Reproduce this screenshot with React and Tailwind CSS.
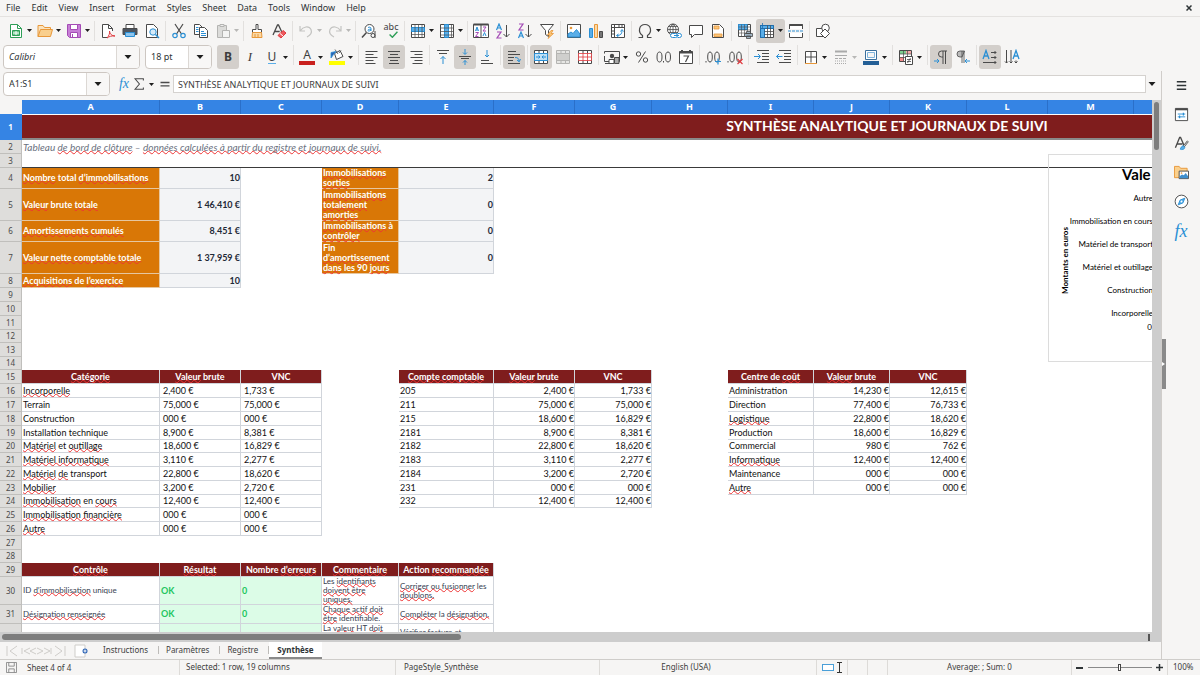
import React from 'react';
import clsx from 'clsx';

const INK = '#4a4a4a';
const BLUE = '#2a8fd4';
const ORANGE = '#e8983a';
const PURPLE = '#a44bb5';
const RED = '#e0393e';

// 16x16 toolbar glyphs
const ICONS = {
  newDoc: (
    <>
      <path d="M2.5 1.5h7l4 4v9h-11z" fill="#fff" stroke="#2e9e57" />
      <path d="M9.5 1.5v4h4" fill="none" stroke="#2e9e57" />
      <path d="M4.500 7.500h7v5h-7z" fill="#6cc58a" stroke="#2e9e57" />
      <path d="M5 10h6M8 8v4" stroke="#fff" />
    </>
  ),
  open: (
    <>
      <path d="M1 13.500v-11h5l1.500 2h6v3" fill="#fbe3bd" stroke={ORANGE} />
      <path d="M1 13.500l2.500-7h12l-2 7z" fill="#f9cf8d" stroke={ORANGE} />
    </>
  ),
  save: (
    <>
      <path d="M1.500 1.500h13v13h-11l-2-2z" fill="#c77fd6" stroke={PURPLE} />
      <path d="M4.500 1.500h7v5h-7z" fill="#fff" stroke={PURPLE} />
      <path d="M4.500 9.500h7v5h-7z" fill="#fff" stroke={PURPLE} />
      <path d="M6.500 11v3" stroke={PURPLE} />
    </>
  ),
  pdf: (
    <>
      <path d="M12.500 8V5.500l-4-4h-6v13H7" fill="#fff" stroke={INK} />
      <path d="M8.500 1.500v4h4" fill="none" stroke={INK} />
      <path d="M7 15c2-2 3-5 2.500-7 0 3 2.500 5 5.500 5-3-.5-6 .5-8 2z" fill="#fff" stroke={RED} />
    </>
  ),
  print: (
    <>
      <path d="M4 1.500h8v4H4z" fill="#fff" stroke={INK} />
      <path d="M1 5.500h14v6H1z" fill="#4d5560" stroke={INK} />
      <path d="M3.500 9.500h9v4h-9z" fill="#8cc4ee" stroke={BLUE} />
    </>
  ),
  preview: (
    <>
      <path d="M2.500 1.500h7l4 4v9h-11z" fill="#fff" stroke={INK} />
      <circle cx="9" cy="9" r="3.200" fill="#d5ebfa" stroke={BLUE} />
      <path d="M11.500 11.500l3.500 3.500" stroke={BLUE} strokeWidth="1.500" />
    </>
  ),
  cut: (
    <>
      <path d="M4 1l6.500 10M12 1L5.500 11" stroke={INK} fill="none" strokeWidth="1.200" />
      <circle cx="4" cy="12.500" r="2.200" fill="none" stroke={BLUE} strokeWidth="1.200" />
      <circle cx="12" cy="12.500" r="2.200" fill="none" stroke={BLUE} strokeWidth="1.200" />
    </>
  ),
  copy: (
    <>
      <path d="M1.500 1.500h5l3 3v7h-8z" fill="#fff" stroke={INK} />
      <path d="M6.500 4.500h5l3 3v7h-8z" fill="#fff" stroke={INK} />
      <path d="M3 4.500h2.500M3 6.500h2.500M3 8.500h2.500M8 8.500h3M8 10.500h5M8 12.500h5" stroke={BLUE} />
    </>
  ),
  paste: (
    <>
      <path d="M2.500 2.500h9v12h-9z" fill="#dcdcda" stroke="#b4b4b2" />
      <path d="M5 1.500h4v2H5z" fill="#eee" stroke="#b4b4b2" />
      <path d="M7.500 7.500h7v7h-7z" fill="#f4f4f3" stroke="#b4b4b2" />
    </>
  ),
  brush: (
    <>
      <path d="M7 1.500h2v5h3.500v3h-9v-3H7z" fill="#fff" stroke={INK} />
      <path d="M3.500 9.500h9l.500 5h-10z" fill="#fbd9a5" stroke={ORANGE} />
      <path d="M6 11v3M9 11v3" stroke={ORANGE} />
    </>
  ),
  clear: (
    <>
      <path d="M2 12L6.500 2h1L11 9.500M3.700 8.500h5" stroke={INK} fill="none" strokeWidth="1.300" />
      <path d="M7 12.500l5-5 3 2.500-5 5z" fill="#ee5a5f" stroke={RED} />
      <path d="M9 10.500l3 2.500" stroke="#fff" />
    </>
  ),
  undo: <path d="M2 3v5h5M2.500 7.500C5 3.500 11 2.500 13 6.500c1.500 4-2 6.500-4 7.500" stroke="#c3c3c1" fill="none" strokeWidth="1.200" />,
  redo: <path d="M14 3v5H9M13.500 7.500C11 3.500 5 2.500 3 6.500c-1.500 4 2 6.500 4 7.500" stroke="#c3c3c1" fill="none" strokeWidth="1.200" />,
  find: (
    <>
      <circle cx="8.500" cy="6" r="4.500" fill="#fff" stroke={INK} />
      <path d="M5.500 9.500L1 14.500" stroke={INK} strokeWidth="1.500" />
      <path d="M7 4.700c1-1 3-.7 3 .8V8M10 6.200c-4-.3-3.700 2.300-1.500 1.700L10 7" stroke={BLUE} fill="none" />
      <circle cx="12" cy="12.500" r="2" fill="#fff" stroke={INK} />
      <path d="M14 8v7" stroke={INK} />
    </>
  ),
  rowOps: (
    <>
      <path d="M1.500 1.500h13v13h-13z" fill="#fff" stroke={INK} />
      <path d="M1.500 4.500h13v4h-13z" fill="#5aaee8" stroke={BLUE} />
      <path d="M1.500 11.500h13M5 1.500v13M8.500 1.500v13M12 1.500v13" stroke={INK} strokeOpacity=".7" />
    </>
  ),
  colOps: (
    <>
      <path d="M1.500 1.500h13v13h-13z" fill="#fff" stroke={INK} />
      <path d="M5.500 1.500h4v13h-4z" fill="#5aaee8" stroke={BLUE} />
      <path d="M1.500 5h13M1.500 8.500h13M1.500 12h13M12.500 1.500v13" stroke={INK} strokeOpacity=".7" />
    </>
  ),
  sort: (
    <>
      <path d="M.5 1.500h15v13H.5zM8 1.500v13" fill="#fff" stroke={INK} />
      <path d="M.5 1.500h15" stroke={INK} strokeWidth="2" />
      <path d="M2.500 8l1.500-4 1.500 4M10 13l1.500-3.500L13 13M3 7h2" stroke={BLUE} fill="none" />
      <path d="M2.500 9.500h3l-3 4h3M10 4h3L10 8h3" stroke={PURPLE} fill="none" />
    </>
  ),
  sortAsc: (
    <>
      <path d="M1.500 7L4 1l2.500 6M2.500 5h3" stroke={BLUE} fill="none" strokeWidth="1.200" />
      <path d="M2 9h4l-4 6h4.500" stroke={PURPLE} fill="none" strokeWidth="1.200" />
      <path d="M11.500 2v12M8.500 11l3 3 3-3" stroke={INK} fill="none" />
    </>
  ),
  sortDesc: (
    <>
      <path d="M2 1h4L2 7h4.500" stroke={PURPLE} fill="none" strokeWidth="1.200" />
      <path d="M1.500 15L4 9l2.500 6M2.500 13h3" stroke={BLUE} fill="none" strokeWidth="1.200" />
      <path d="M11.500 2v12M8.500 11l3 3 3-3" stroke={INK} fill="none" />
    </>
  ),
  filter: (
    <>
      <path d="M1.500 1.500h13l-5 6v6l-3-2v-4z" fill="#fff" stroke={INK} />
      <path d="M12 7.500L8.500 12H11l-2 3.500 5.500-5H12l2-3z" fill="#fbc67a" stroke={ORANGE} strokeWidth=".8" />
    </>
  ),
  image: (
    <>
      <path d="M1.500 1.500h13v13h-13z" fill="#fff" stroke={INK} />
      <circle cx="5" cy="5" r="1.300" fill={ORANGE} />
      <path d="M2 14v-3l3-2 2 1.500 3.500-4L14 11v3z" fill="#5aaee8" stroke={BLUE} />
    </>
  ),
  chart: (
    <>
      <path d="M1.500 5.500h3v9h-3z" fill="#5aaee8" stroke={BLUE} />
      <path d="M6.500 1.500h3v13h-3z" fill="#fbd9a5" stroke={ORANGE} />
      <path d="M11.500 8.500h3v6h-3z" fill="#777" stroke={INK} />
    </>
  ),
  pivot: (
    <>
      <path d="M1.500 1.500h13v13h-13zM1.500 4.500h13M4.500 1.500v13" fill="#fff" stroke={INK} />
      <path d="M9 1.500v3M12 1.500v3M1.500 8h3M1.500 11h3" stroke={INK} />
      <path d="M7 12.500c3.500 0 5-1.500 5-5M10.500 8.500l1.500-2 1.500 2M8.500 11l-2 1.500 2 1.500" stroke={BLUE} fill="none" />
    </>
  ),
  omega: <path d="M1.500 14.500h4v-2C.5 9 2 1.500 8 1.500s7.500 7.500 2.500 11v2h4" stroke={INK} fill="none" strokeWidth="1.200" />,
  link: (
    <>
      <circle cx="7" cy="6.500" r="5.500" fill="#fff" stroke={INK} />
      <path d="M1.500 6.500h11M7 1v11M3 3.500h8M3 9.500h8M7 1C3 4 3 9 7 12M7 1c4 3 4 8 0 11" stroke={INK} fill="none" strokeWidth=".8" />
      <path d="M6.500 10.500h3a2 2 0 010 4h-3a2 2 0 010-4zM11.500 10.500h2a2 2 0 010 4h-2" fill="#fff" stroke={BLUE} />
      <path d="M8 12.500h5" stroke={BLUE} />
    </>
  ),
  comment: <path d="M1.500 2.500h13v9h-8l-3 3v-3h-2z" stroke={INK} fill="#fff" />,
  headerFooter: (
    <>
      <path d="M2.500 1.500h7l4 4v9h-11z" fill="#fff" stroke={INK} />
      <path d="M4 3h5v3H4zM4 11h8v2.500H4z" fill="#fbc67a" stroke={ORANGE} strokeWidth=".8" />
    </>
  ),
  printArea: (
    <>
      <path d="M1.500 1.500h12v12h-12z" fill="#fff" stroke={INK} />
      <path d="M1.500 1.500h9v5h-9z" fill="#5aaee8" stroke={BLUE} />
      <path d="M1.500 4h12M1.500 7h12M1.500 10h12M4.500 1.500v12M7.500 1.500v12M10.500 1.500v12" stroke={INK} strokeWidth=".6" />
      <path d="M7.500 10.500h8v3h-8zM9.500 8.500h4v2h-4zM9.500 13h4v2.500h-4z" fill="#9fb4c4" stroke={INK} strokeWidth=".8" />
    </>
  ),
  freeze: (
    <>
      <path d="M1.500 2.500h13v12h-13z" fill="#fff" stroke={INK} />
      <path d="M1.500 2.500h13v3h-13zM1.500 5.500h4v9h-4z" fill="#5aaee8" stroke="#1f6fae" />
      <path d="M5.500 8.500h9M5.500 11.500h9M8.500 2.500v12M11.500 2.500v12" stroke={INK} strokeWidth=".8" />
      <path d="M3.500 0v5M1 2.500h5" stroke="#1f6fae" strokeWidth=".8" />
    </>
  ),
  split: (
    <>
      <path d="M1.500 6V1.500h13V6M1.500 10v4.500h13V10" fill="#fff" stroke={INK} />
      <path d="M1.500 2h13" stroke={INK} strokeWidth="2" />
      <path d="M0 8h16" stroke={BLUE} strokeDasharray="3 1" />
    </>
  ),
  shapes: (
    <>
      <path d="M1.500 5.500h7v8h-7z" fill="#fff" stroke={INK} />
      <circle cx="10.500" cy="5" r="3.800" fill="#fff" stroke={INK} />
      <path d="M5.500 10.500L10 6l4.500 4.500L10 15z" fill="#fff" stroke={INK} />
    </>
  ),
  alignLeft: <path d="M1.500 2.500h12M1.500 5.500h8M1.500 8.500h12M1.500 11.500h8M1.500 14.500h10" stroke={INK} />,
  alignCenter: <path d="M2 2.500h12M4 5.500h8M2 8.500h12M4 11.500h8M3 14.500h10" stroke={INK} />,
  alignRight: <path d="M2.500 2.500h12M6.500 5.500h8M2.500 8.500h12M6.500 11.500h8M4.500 14.500h10" stroke={INK} />,
  vTop: (
    <>
      <path d="M2 1.500h12M4 4.500h8" stroke={INK} />
      <path d="M8 15V7.500M5.500 10L8 7.500l2.500 2.500" stroke={BLUE} fill="none" />
    </>
  ),
  vMiddle: (
    <>
      <path d="M2 7.500h12M4 9.500h8" stroke={INK} />
      <path d="M8 0v5M6 3.500l2 2 2-2M8 16.500v-5M6 13.500l2-2 2 2" stroke={BLUE} fill="none" />
    </>
  ),
  vBottom: (
    <>
      <path d="M2 14.500h12M2 11.500h8" stroke={INK} />
      <path d="M8 1v7M6 6l2 2 2-2" stroke={BLUE} fill="none" />
    </>
  ),
  wrap: (
    <>
      <path d="M2 2.500h8M2 5.500h12M2 8.500h6M2 11.500h5M2 14.500h12" stroke={INK} />
      <path d="M9 8.500c3 0 4 1 4 4M11 11l2.200 1.800L14.500 10" stroke={BLUE} fill="none" />
    </>
  ),
  mergeCenter: (
    <>
      <path d="M1.500 1.500h13v13h-13zM6 1.500v3M10.500 1.500v3M6 11.500v3M10.500 11.500v3" fill="#fff" stroke={INK} />
      <path d="M1.500 4.500h13v7h-13z" fill="#bfe0f6" stroke={BLUE} />
      <path d="M3 8h4M9 8h4M5.500 6.500L7 8l-1.500 1.500M10.500 6.500L9 8l1.500 1.500" stroke={BLUE} fill="none" />
    </>
  ),
  merge: (
    <>
      <path d="M1.500 1.500h13v13h-13zM6 1.500v3M10.500 1.500v3M6 11.500v3M10.500 11.500v3" fill="#e6e6e4" stroke="#b4b4b2" />
      <path d="M1.500 4.500h13v7h-13z" fill="#cfcfcd" stroke="#b4b4b2" />
    </>
  ),
  unmerge: (
    <>
      <path d="M1.500 1.500h13v13h-13zM6 1.500v13M10.500 1.500v13" fill="#fff" stroke={INK} />
      <path d="M1.500 4.500h13v7h-13zM6 4.500v7M10.500 4.500v7M1.500 8h13" fill="#fff" stroke={RED} strokeWidth=".8" />
    </>
  ),
  currency: (
    <>
      <path d="M.5 4.500v-2h15v10h-4M.5 7v5.500h5" fill="none" stroke={INK} />
      <circle cx="8" cy="7" r="2.200" fill={INK} />
      <path d="M5 10.500h5v4H5z" fill="#fff" stroke={INK} />
      <path d="M10.500 8.500h4.500v6h-4.500z" fill="#aaa" stroke={INK} />
      <path d="M1 14.500h4" stroke={INK} />
    </>
  ),
  percent: (
    <>
      <circle cx="4.500" cy="5" r="2.200" fill="none" stroke={INK} />
      <circle cx="11.500" cy="11" r="2.200" fill="none" stroke={INK} />
      <path d="M11.500 2.500l-7 11" stroke={INK} />
    </>
  ),
  decimal: (
    <>
      <ellipse cx="3.500" cy="8" rx="2.500" ry="5" fill="none" stroke={INK} />
      <ellipse cx="12" cy="8" rx="2.500" ry="5" fill="none" stroke={INK} />
      <path d="M7.500 12v1.500" stroke={INK} />
    </>
  ),
  date: (
    <>
      <path d="M1.500 2.500h13v12h-13z" fill="#fff" stroke={INK} />
      <path d="M1.500 3.500h13M4 1v3M12 1v3" stroke={INK} strokeWidth="2" />
      <path d="M5.500 7h5l-3 6" stroke={INK} fill="none" strokeWidth="1.200" />
    </>
  ),
  addDecimal: (
    <>
      <path d="M1 12v1.500" stroke={INK} />
      <ellipse cx="5" cy="8" rx="2.300" ry="5" fill="none" stroke={INK} />
      <ellipse cx="12" cy="8" rx="2.300" ry="5" fill="none" stroke={INK} />
      <path d="M13 9.500v6M10 12.500h6" stroke={BLUE} strokeWidth="1.200" />
    </>
  ),
  delDecimal: (
    <>
      <path d="M1 12v1.500" stroke={INK} />
      <ellipse cx="5" cy="8" rx="2.300" ry="5" fill="none" stroke={INK} />
      <ellipse cx="12" cy="8" rx="2.300" ry="5" fill="none" stroke={INK} />
      <path d="M10.500 10l5 5M15.500 10l-5 5" stroke={RED} strokeWidth="1.200" />
    </>
  ),
  indent: (
    <>
      <path d="M3 1.500h12M8 4.500h7M8 7.500h7M8 10.500h7M3 13.500h12" stroke={INK} />
      <path d="M0 7.500h6M4 5l2.500 2.500L4 10" stroke={BLUE} fill="none" />
    </>
  ),
  outdent: (
    <>
      <path d="M3 1.500h12M8 4.500h7M8 7.500h7M8 10.500h7M3 13.500h12" stroke={INK} />
      <path d="M.5 7.500h6M3 5L.5 7.500 3 10" stroke={BLUE} fill="none" />
    </>
  ),
  borders: (
    <>
      <path d="M2.500 14V2.500h11V14M8 2.500v11M2.500 8h11" fill="#fff" stroke={INK} />
      <path d="M2 14.500h12" stroke={ORANGE} />
    </>
  ),
  lineStyle: (
    <>
      <path d="M2 2.500h12" stroke="#aaa" strokeWidth="2" />
      <path d="M2 6.500h12" stroke="#aaa" />
      <path d="M2 9.500h12" stroke="#aaa" strokeDasharray="3 1" />
      <path d="M2 12h12M2 14.500h12" stroke="#aaa" strokeDasharray="1 1" />
    </>
  ),
  lineColor: (
    <>
      <path d="M2.500 1.500h11v9h-11z" fill="#fff" stroke="#3a6f9c" />
      <path d="M4.500 3.500h7v5h-7z" fill="#f6f5f4" stroke="#7fb4dc" />
      <path d="M0 14h16" stroke="#245f96" strokeWidth="4" />
    </>
  ),
  conditional: (
    <>
      <path d="M1.500 1.500h12v11h-12z" fill="#fff" stroke={INK} />
      <path d="M2 2h6v3H2z" fill="#7ccf8f" />
      <path d="M2 8h4v4H2z" fill="#f08a8a" />
      <path d="M8 2h5v3H8z" fill="#f5a9a9" />
      <path d="M1.500 5h12M1.500 8.500h12M5.500 1.500v11M9.500 1.500v11" stroke={INK} strokeWidth=".7" />
      <path d="M7.500 7.500h7v8h-7z" fill="#fff" stroke={INK} />
      <path d="M9 10.500h4M9 12.500h4M12.500 9l-3 5" stroke={INK} strokeWidth=".8" />
    </>
  ),
  ltr: (
    <>
      <path d="M14 2H8.500a3 3 0 000 6H10M10 2v13M12.500 2v13" stroke={INK} fill="none" />
      <path d="M1 12h5M4 10l2 2-2 2" stroke={BLUE} fill="none" />
    </>
  ),
  rtl: (
    <>
      <path d="M9.500 2H5a3 3 0 000 6h2zM7 2v12M9 2v12" stroke={INK} fill="#bbb" strokeWidth=".8" />
      <path d="M15 12h-5M12 10l-2 2 2 2" stroke={BLUE} fill="none" />
    </>
  ),
  textH: (
    <>
      <path d="M1 10l3-8.500L7 10M2 7h4" stroke={BLUE} fill="none" strokeWidth="1.300" />
      <path d="M9 3.500h5M9 8.500h5M1 13.500h13M12.500 2l1.500 1.500L12.500 5M12.500 7L14 8.500 12.500 10M12.500 12l1.500 1.500-1.500 1.500" stroke={INK} fill="none" />
    </>
  ),
  textV: (
    <>
      <path d="M9 10l3-8.500L15 10M10 7h4" stroke={BLUE} fill="none" strokeWidth="1.300" />
      <path d="M2.500 1v13M7 1v13M12 11.500V14M1 12.500L2.500 14 4 12.500M5.500 12.500L7 14l1.500-1.500M10.500 12.500L12 14l1.500-1.500" stroke={INK} fill="none" />
    </>
  ),
  bucket: (
    <>
      <path d="M5.500 4.500l5.500-3 3 6-6.500 3z" fill="#fff" stroke={INK} />
      <path d="M9 5L6 .500M10 4l2-2.500" stroke={INK} fill="none" strokeWidth=".8" />
      <path d="M2 9V3.500l5-1-2.500 3z" fill="#2a62b4" stroke={BLUE} strokeWidth=".8" />
      <path d="M0 14h16" stroke="#ff0" strokeWidth="4" />
    </>
  ),
  props: (
    <>
      <path d="M1.500 1.500h13v13h-13z" fill="#fff" stroke={INK} />
      <path d="M1.500 2.500h13" stroke={INK} strokeWidth="2" />
      <path d="M4 7.500h8M4 10.500h8" stroke={BLUE} />
      <path d="M10 6v3M6 9v3" stroke={BLUE} strokeWidth="1.300" />
    </>
  ),
  styles: (
    <>
      <path d="M1.500 12.500L6 1.500h1l3.500 8M3 8.500h6" stroke={INK} fill="none" strokeWidth="1.400" />
      <path d="M15 5.500l-5 6" stroke={INK} strokeWidth="2.200" />
      <path d="M15 5.500l-5 6" stroke="#fff" strokeWidth=".8" />
      <path d="M10 10.500c-2 0-2.500 2-3.500 3.500 2 1 5 .5 5-2z" fill="#5aaee8" stroke={BLUE} strokeWidth=".8" />
    </>
  ),
  gallery: (
    <>
      <path d="M.5 13.500v-12h5l1.500 2h7v10z" fill="#fbd08c" stroke={ORANGE} />
      <path d="M5.500 6.500h10v8h-10z" fill="#fff" stroke={INK} />
      <path d="M6 14v-2l2.500-2 2 1 2-2.500L15 12v2z" fill="#3f8fce" />
      <circle cx="8" cy="8.500" r=".9" fill={ORANGE} />
    </>
  ),
  navigator: (
    <>
      <circle cx="8" cy="8" r="6.800" fill="#fff" stroke={INK} />
      <path d="M11.500 4.500L9.500 9.500l-5 2 2-5z" fill="#5aaee8" stroke={BLUE} />
      <circle cx="8" cy="8" r="1" fill="#fff" />
    </>
  ),
  burger: <path d="M3 4h10M3 8h10M3 12h10" stroke="#2e3436" strokeWidth="1.400" />,
  sigma: <path d="M13 4V2H3.500l5 6-5 6H13v-2" stroke={INK} fill="none" strokeWidth="1.200" />,
  equals: <path d="M2 6h12M2 10.500h12" stroke={INK} strokeWidth="1.800" />,
};

const Icon = ({ name, className = 'size-4' }) => (
  <svg viewBox="0 0 16 16" className={className} aria-hidden="true">
    {ICONS[name]}
  </svg>
);

const Caret = ({ className = 'h-[3px] w-[5px]', faded }) => (
  <svg viewBox="0 0 7 4" className={className} aria-hidden="true">
    <path d="M0 0h7L3.500 4z" fill={faded ? '#b8b8b6' : '#1e1e1e'} />
  </svg>
);

const Fx = ({ className }) => (
  <span className={clsx("font-['Liberation_Serif',serif] italic text-[#2a8fd4]", className)}>fx</span>
);

const Glyph = ({ name }) => {
  switch (name) {
    case 'bold':
      return <span className="text-[12px] font-bold text-[#3d3d3d]">B</span>;
    case 'italic':
      return <span className="font-['Liberation_Serif',serif] text-[13px] italic text-[#3d3d3d]">I</span>;
    case 'underline':
      return <span className="border-b border-[#5aaee8] text-[12px] leading-[13px] text-[#3d3d3d]">U</span>;
    case 'fontColor':
      return <span className="w-4 border-b-4 border-[#c9211e] text-center text-[12px] leading-[12px] text-[#3d3d3d]">A</span>;
    case 'spell':
      return (
        <span className="flex flex-col items-end text-[9px] leading-[8px] text-[#3d3d3d]">
          abc
          <svg viewBox="0 0 8 6" className="h-[7px] w-[9px]" aria-hidden="true">
            <path d="M.5 3L3 5.500 7.500.5" fill="none" stroke="#2e9e57" strokeWidth="1.200" />
          </svg>
        </span>
      );
    default:
      return <Icon name={name} />;
  }
};

// '|' = separator, v = has a drop-down caret, on = pressed, off = disabled
const STANDARD = [
  { n: 'newDoc', v: 1 }, { n: 'open', v: 1 }, { n: 'save', v: 1 }, '|',
  { n: 'pdf' }, { n: 'print' }, { n: 'preview' }, '|',
  { n: 'cut' }, { n: 'copy' }, { n: 'paste', v: 1, off: 1 }, '|',
  { n: 'brush' }, { n: 'clear' }, '|',
  { n: 'undo', v: 1, off: 1 }, { n: 'redo', v: 1, off: 1 }, '|',
  { n: 'find' }, { n: 'spell' }, '|',
  { n: 'rowOps', v: 1 }, { n: 'colOps', v: 1 }, '|',
  { n: 'sort' }, { n: 'sortAsc' }, { n: 'sortDesc' }, { n: 'filter' }, '|',
  { n: 'image' }, { n: 'chart' }, { n: 'pivot' }, '|',
  { n: 'omega', v: 1 }, { n: 'link' }, { n: 'comment' }, { n: 'headerFooter' }, '|',
  { n: 'printArea' }, { n: 'freeze', v: 1, on: 1 }, { n: 'split' }, '|',
  { n: 'shapes' },
];

const FORMATTING = [
  { n: 'bold', on: 1 }, { n: 'italic' }, { n: 'underline', v: 1 }, '|',
  { n: 'fontColor', v: 1 }, { n: 'bucket', v: 1 }, '|',
  { n: 'alignLeft' }, { n: 'alignCenter', on: 1 }, { n: 'alignRight' }, '|',
  { n: 'vTop' }, { n: 'vMiddle', on: 1 }, { n: 'vBottom' }, '|',
  { n: 'wrap', on: 1 }, '|',
  { n: 'mergeCenter', on: 1 }, { n: 'merge', off: 1 }, { n: 'unmerge' }, '|',
  { n: 'currency', v: 1 }, { n: 'percent' }, { n: 'decimal' }, { n: 'date' }, '|',
  { n: 'addDecimal' }, { n: 'delDecimal' }, '|',
  { n: 'indent' }, { n: 'outdent' }, '|',
  { n: 'borders', v: 1 }, { n: 'lineStyle', v: 1, off: 1 }, { n: 'lineColor', v: 1 }, '|',
  { n: 'conditional', v: 1 }, '|',
  { n: 'ltr', on: 1 }, { n: 'rtl' }, '|',
  { n: 'textH', on: 1 }, { n: 'textV' },
];

const ToolButtons = ({ items, caretBox }) =>
  items.map((it, i) =>
    it === '|' ? (
      <span key={i} className="flex h-5 w-[5px] justify-center">
        <span className="w-px bg-[#e2e0de]" />
      </span>
    ) : (
      <button
        key={i}
        type="button"
        aria-label={it.n}
        className={clsx('flex h-6 items-center rounded-[3px]', it.on && 'bg-[#d3cfcb]')}
      >
        <span className="flex w-[22px] justify-center">
          <Glyph name={it.n} />
        </span>
        {it.v && (
          <span className={clsx('flex', caretBox)}>
            <Caret faded={it.off} />
          </span>
        )}
      </button>
    )
  );

const Combo = ({ label, value, className, inputClass }) => (
  <div className={clsx('flex h-6 overflow-hidden rounded-[4px] border border-[#cdc7c2] bg-white', className)}>
    <input
      aria-label={label}
      defaultValue={value}
      className={clsx('w-0 min-w-0 flex-1 px-[5px] text-[9px] text-[#2e3436] outline-none', inputClass)}
    />
    <button
      type="button"
      aria-label={label}
      className="flex w-[23px] items-center justify-center border-l border-[#dcd8d4] bg-[#f8f7f6]"
    >
      <Caret className="h-[4px] w-[8px]" />
    </button>
  </div>
);

const MENUS = ['File', 'Edit', 'View', 'Insert', 'Format', 'Styles', 'Sheet', 'Data', 'Tools', 'Window', 'Help'];

/* ---------- sheet ---------- */

const COLS = [
  ['A', 'w-[138px]'], ['B', 'w-[81px]'], ['C', 'w-[81px]'], ['D', 'w-[77px]'], ['E', 'w-[95px]'],
  ['F', 'w-[81px]'], ['G', 'w-[77px]'], ['H', 'w-[76px]'], ['I', 'w-[86px]'], ['J', 'w-[76px]'],
  ['K', 'w-[77px]'], ['L', 'w-[81px]'], ['M', 'w-[86px]'], ['', 'w-[618px]'],
];

const LOOKS = {
  head: 'border-[#d1d5db] bg-[#7f1d1d] p-0 text-center text-[9px] font-bold text-white',
  label: 'border-[#e6c7a0] bg-[#d97706] p-0 pl-px text-[9px] font-bold leading-[10px] text-white',
  kpi: 'border-[#d1d5db] bg-[#f3f4f6] p-0 text-right text-[9px] font-bold text-[#1f2937]',
  text: 'border-[#d1d5db] p-0 pl-px text-[9px] text-[#111]',
  money: 'border-[#d1d5db] p-0 pl-[3px] text-[9px] text-[#111]',
  num: 'border-[#d1d5db] p-0 text-right text-[9px] text-[#111]',
  note: 'border-[#d1d5db] p-0 pl-px text-[8px] leading-[9px] text-[#374151]',
  noteWrap: 'border-[#d1d5db] p-0 pl-px pr-2 text-[8px] leading-[9px] text-[#374151]',
  noteTop: 'border-[#d1d5db] p-0 pl-px align-top text-[8px] leading-[9px] text-[#374151]',
  noteLow: 'border-[#d1d5db] p-0 pl-px pt-1 align-top text-[8px] leading-[9px] text-[#374151]',
  ok: 'border-[#d1d5db] bg-[#dcfce7] p-0 pl-px text-[9px] font-bold text-[#22c55e]',
};

const h = (t) => ['head', t];
const mid = (a, b, c) => ({ E: ['text', a], F: ['num', b], G: ['num', c] });
const left = (a, b, c) => ({ A: ['text', a], B: ['money', b], C: ['money', c] });
const right = (a, b, c) => ({ I: ['text', a], J: ['num', b], K: ['num', c] });

// text between underscores is flagged by the spell checker
const ROWS = [
  [4, 'h-[21px]', { A: ['label', '_Nombre_ total _d’immobilisations_'], B: ['kpi', '10'], D: ['label', '_Immobilisations sorties_'], E: ['kpi', '2'] }],
  [5, 'h-8', { A: ['label', '_Valeur_ brute _totale_'], B: ['kpi', '1 46,410 €'], D: ['label', '_Immobilisations totalement amorties_'], E: ['kpi', '0'] }],
  [6, 'h-[21px]', { A: ['label', '_Amortissements cumulés_'], B: ['kpi', '8,451 €'], D: ['label', '_Immobilisations_ à _contrôler_'], E: ['kpi', '0'] }],
  [7, 'h-8', { A: ['label', '_Valeur nette comptable totale_'], B: ['kpi', '1 37,959 €'], D: ['label', 'Fin _d’amortissement dans_ les 90 _jours_'], E: ['kpi', '0'] }],
  [8, 'h-[14px]', { A: ['label', '_Acquisitions_ de _l’exercice_'], B: ['kpi', '10'] }],
  [9, 'h-[14px]', {}],
  [10, 'h-[14px]', {}],
  [11, 'h-[14px]', {}],
  [12, 'h-[13px]', {}],
  [13, 'h-[14px]', {}],
  [14, 'h-[13px]', {}],
  [15, 'h-[14px]', {
    A: h('_Catégorie_'), B: h('_Valeur_ brute'), C: h('VNC'),
    E: h('_Compte comptable_'), F: h('_Valeur_ brute'), G: h('VNC'),
    I: h('Centre de _coût_'), J: h('_Valeur_ brute'), K: h('VNC'),
  }],
  [16, 'h-[14px]', { ...left('_Incorporelle_', '2,400 €', '1,733 €'), ...mid('205', '2,400 €', '1,733 €'), ...right('Administration', '14,230 €', '12,615 €') }],
  [17, 'h-[14px]', { ...left('Terrain', '75,000 €', '75,000 €'), ...mid('211', '75,000 €', '75,000 €'), ...right('Direction', '77,400 €', '76,733 €') }],
  [18, 'h-[14px]', { ...left('Construction', '000 €', '000 €'), ...mid('215', '18,600 €', '16,829 €'), ...right('_Logistique_', '22,800 €', '18,620 €') }],
  [19, 'h-[14px]', { ...left('Installation technique', '8,900 €', '8,381 €'), ...mid('2181', '8,900 €', '8,381 €'), ...right('Production', '18,600 €', '16,829 €') }],
  [20, 'h-[13px]', { ...left('_Matériel_ et _outillage_', '18,600 €', '16,829 €'), ...mid('2182', '22,800 €', '18,620 €'), ...right('Commercial', '980 €', '762 €') }],
  [21, 'h-[14px]', { ...left('_Matériel informatique_', '3,110 €', '2,277 €'), ...mid('2183', '3,110 €', '2,277 €'), ...right('_Informatique_', '12,400 €', '12,400 €') }],
  [22, 'h-[14px]', { ...left('_Matériel_ _de_ transport', '22,800 €', '18,620 €'), ...mid('2184', '3,200 €', '2,720 €'), ...right('Maintenance', '000 €', '000 €') }],
  [23, 'h-[14px]', { ...left('_Mobilier_', '3,200 €', '2,720 €'), ...mid('231', '000 €', '000 €'), ...right('_Autre_', '000 €', '000 €') }],
  [24, 'h-[13px]', { ...left('_Immobilisation_ en _cours_', '12,400 €', '12,400 €'), ...mid('232', '12,400 €', '12,400 €') }],
  [25, 'h-[14px]', left('_Immobilisation financière_', '000 €', '000 €')],
  [26, 'h-[14px]', left('_Autre_', '000 €', '000 €')],
  [27, 'h-[14px]', {}],
  [28, 'h-[13px]', {}],
  [29, 'h-[14px]', { A: h('_Contrôle_'), B: h('_Résultat_'), C: h('Nombre _d’erreurs_'), D: h('_Commentaire_'), E: h('Action _recommandée_') }],
  [30, 'h-7', { A: ['note', 'ID _d’immobilisation_ unique'], B: ['ok', 'OK'], C: ['ok', '0'], D: ['noteWrap', 'Les _identifiants doivent être uniques._'], E: ['note', '_Corriger ou fusionner_ les _doublons._'] }],
  [31, 'h-[19px]', { A: ['note', '_Désignation renseignée_'], B: ['ok', 'OK'], C: ['ok', '0'], D: ['noteWrap', '_Chaque actif doit être_ identifiable.'], E: ['note', '_Compléter_ la _désignation._'] }],
  ['', 'h-7', { A: ['note', ''], B: ['ok', ''], C: ['ok', ''], D: ['noteTop', 'La _valeur_ HT _doit_'], E: ['noteLow', '_Vérifier_ facture et'] }],
];

const Spelled = ({ text }) =>
  text.split('_').map((part, i) =>
    i % 2 ? (
      <span key={i} className="underline decoration-[#e33] decoration-wavy decoration-1 [text-decoration-skip-ink:none] [text-underline-offset:-1px]">
        {part}
      </span>
    ) : (
      part
    )
  );

const RowHead = ({ n, on }) => (
  <th
    scope="row"
    className={clsx(
      "border-r border-b p-0 font-['Noto_Sans',sans-serif] text-[8px]",
      on ? 'border-[#3584e4] bg-[#3584e4] font-bold text-white' : 'border-[#c0bfbc] bg-[#dedddb] font-normal text-[#4a4a4a]'
    )}
  >
    {n}
  </th>
);

const CHART_LABELS = ['Autre', 'Immobilisation en cours', 'Matériel de transport', 'Matériel et outillage', 'Construction', 'Incorporelle'];

function Chart() {
  return (
    <div className="absolute left-[1048px] top-[54px] h-[208px] w-[300px] border border-[#dcdcdc] font-['Lato',sans-serif] text-black">
      <p className="ml-[73px] mt-[10px] text-[15px] font-bold leading-[18px]">Vale</p>
      <div className="flex w-[104px]">
        <div className="flex w-8 shrink-0 items-center justify-center pt-2">
          <span className="rotate-180 whitespace-nowrap text-[8px] font-bold [writing-mode:vertical-rl]">Montants en euros</span>
        </div>
        <div className="flex min-w-0 flex-1 flex-col items-end whitespace-nowrap pt-1 text-[8px]">
          {CHART_LABELS.map((l) => (
            <span key={l} className="h-[23px] leading-[23px]">{l}</span>
          ))}
          <span className="pr-px leading-[5px]">0</span>
        </div>
      </div>
    </div>
  );
}

function Sheet() {
  return (
    <div className="relative min-h-0 flex-1 overflow-hidden bg-white">
      <table className="w-[1752px] table-fixed border-separate border-spacing-0 font-['Lato',sans-serif] leading-[12px]">
        <colgroup>
          <col className="w-[22px]" />
          {COLS.map(([c, w]) => <col key={c} className={w} />)}
        </colgroup>
        <thead>
          <tr className="h-[14px]">
            <td className="bg-[#f6f5f4] p-0" />
            {COLS.map(([c]) => (
              <th
                key={c}
                scope="col"
                className="border-r border-[#2a6fc9] bg-[#3584e4] p-0 font-['Noto_Sans',sans-serif] text-[9px] font-bold text-white"
              >
                {c}
              </th>
            ))}
          </tr>
        </thead>
        <tbody>
          <tr className="h-[26px]">
            <RowHead n={1} on />
            <td colSpan={14} className="border-b-2 border-t border-b-[#8a8a8a] border-t-white bg-[#7f1d1d] p-0 pb-[2px] text-center text-[14px] font-bold leading-[18px] text-white">
              SYNTHÈSE ANALYTIQUE ET JOURNAUX DE SUIVI
            </td>
          </tr>
          <tr className="h-[14px]">
            <RowHead n={2} />
            <td colSpan={14} className="p-0 pl-px text-[10px] italic text-[#6b7280]">
              <Spelled text="Tableau _de bord de clôture_ – _données calculées à partir du registre et journaux de suivi._" />
            </td>
          </tr>
          <tr className="h-[14px]">
            <RowHead n={3} />
            <td colSpan={14} className="border-b border-[#3a3a3a] p-0" />
          </tr>
          {ROWS.map(([n, height, cells], i) => (
            <tr key={i} className={height}>
              <RowHead n={n} />
              {COLS.map(([c]) => {
                const cell = cells[c];
                if (!cell) return <td key={c} className="p-0" />;
                return (
                  <td key={c} className={clsx('border-r border-b', LOOKS[cell[0]])}>
                    <Spelled text={cell[1]} />
                  </td>
                );
              })}
            </tr>
          ))}
        </tbody>
      </table>
      <Chart />
    </div>
  );
}

const TABS = ['Instructions', 'Paramètres', 'Registre', 'Synthèse'];

function TabBar() {
  return (
    <div className="flex h-[17px] items-center text-[8px] text-[#3d3d3d]">
      <svg viewBox="0 0 60 12" className="ml-[6px] h-3 w-[60px]" fill="none" stroke="#cfcdca" aria-hidden="true">
        <path d="M1 1v10M11 1L4 6l7 5M16 3v6M24 3l-6 3 6 3M30 3l-6 3 6 3M31 3l6 3-6 3M38 3l6 3-6 3M45 3v6M49 1l7 5-7 5M59 1v10" />
      </svg>
      <button type="button" aria-label="Add sheet" className="mx-2">
        <svg viewBox="0 0 14 14" className="size-[14px]">
          <path d="M1 1h10v12H1z" fill="#fff" stroke="#cfcdca" />
          <circle cx="11" cy="7" r="2.500" fill="#2a62b4" />
          <path d="M11 5.500v3M9.500 7h3" stroke="#fff" />
        </svg>
      </button>
      <div role="tablist" className="flex h-full">
        {TABS.map((t) => {
          const on = t === 'Synthèse';
          return (
            <button
              key={t}
              type="button"
              role="tab"
              aria-selected={on}
              className={clsx(
                'flex items-center border-b-2',
                on ? 'border-[#8a8a8a] bg-white px-2 font-bold text-[#2e3436]' : 'border-transparent pl-[7px]'
              )}
            >
              {t}
              {!on && <span className="ml-[10px] h-2 w-px bg-[#bdbbb8]" />}
            </button>
          );
        })}
      </div>
    </div>
  );
}

function StatusBar() {
  return (
    <footer className="flex h-4 shrink-0 items-stretch divide-x divide-[#dddbd8] border-t border-[#cfcdca] text-[8px] leading-[14px] text-[#3d3d3d]">
      <div className="flex w-[15%] items-center gap-[10px] pl-[6px]">
        <svg viewBox="0 0 12 12" className="size-[11px]" fill="none" stroke="#8a8a8a" aria-hidden="true">
          <path d="M.5.5h11v11H.5zM3 .5v4h6v-4M3 11.500v-4h6v4" />
        </svg>
        Sheet 4 of 4
      </div>
      <div className="w-[18%] pl-[6px]">Selected: 1 row, 19 columns</div>
      <div className="w-[17%] pl-2">PageStyle_Synthèse</div>
      <div className="flex-1 pr-11 text-center">English (USA)</div>
      <div className="flex w-[31px] items-center justify-center gap-[3px]">
        <span className="h-[7px] w-3 border border-[#4a9fd8] bg-white" />
        <svg viewBox="0 0 5 11" className="h-[11px] w-[5px]" stroke="#333" aria-hidden="true">
          <path d="M0 .5h5M2.500.5v10M0 10.500h5" />
        </svg>
      </div>
      <div className="w-5" />
      <div className="w-5" />
      <div className="w-[184px] text-center">Average: ; Sum: 0</div>
      <div className="flex w-24 items-center justify-between px-1">
        <button type="button" aria-label="Zoom out" className="h-[2px] w-[7px] bg-[#2e3436]" />
        <input
          type="range"
          aria-label="Zoom"
          defaultValue="50"
          className="h-px w-16 appearance-none bg-[#8a8a8a] [&::-webkit-slider-thumb]:h-[7px] [&::-webkit-slider-thumb]:w-[3px] [&::-webkit-slider-thumb]:appearance-none [&::-webkit-slider-thumb]:border [&::-webkit-slider-thumb]:border-[#444] [&::-webkit-slider-thumb]:bg-white"
        />
        <button type="button" aria-label="Zoom in">
          <svg viewBox="0 0 7 7" className="size-[7px]" stroke="#2e3436" strokeWidth="1.500">
            <path d="M3.500 0v7M0 3.500h7" />
          </svg>
        </button>
      </div>
      <div className="w-8 pl-[5px]">100%</div>
    </footer>
  );
}

function App() {
  return (
    <div className="flex h-screen flex-col overflow-hidden bg-[#f6f5f4] font-['Noto_Sans',sans-serif] text-[#2e3436]">
      <nav className="flex h-[17px] shrink-0 items-center gap-px border-b border-[#e4e2e0] pl-px text-[9px]">
        {MENUS.map((m) => (
          <button key={m} type="button" className="px-[5px]">{m}</button>
        ))}
        <button type="button" aria-label="Close" className="ml-auto mr-2">
          <svg viewBox="0 0 6 6" className="size-[6px]" stroke="#2e3436" strokeWidth="1.500">
            <path d="M.5.5l5 5M5.500.5l-5 5" />
          </svg>
        </button>
      </nav>

      <div className="flex h-[27px] shrink-0 items-center pl-[5px]">
        <ToolButtons items={STANDARD} caretBox="w-[7px]" />
      </div>

      <div className="flex h-[27px] shrink-0 items-start pl-[3px] pt-px">
        <Combo label="Font name" value="Calibri" className="w-[137px]" inputClass="italic" />
        <Combo label="Font size" value="18 pt" className="mx-[5px] w-[67px]" />
        <ToolButtons items={FORMATTING} caretBox="w-2" />
      </div>

      <div className="flex min-h-0 flex-1">
        <div className="flex min-w-0 flex-1 flex-col">
          <div className="flex h-[29px] shrink-0 items-center pb-[3px] pl-[3px]">
            <Combo label="Name box" value="A1:S1" className="w-[107px]" />
            <button type="button" aria-label="Function wizard" className="ml-[6px] flex w-4 justify-center">
              <Fx className="text-[14px] leading-[16px]" />
            </button>
            <button type="button" aria-label="Select function" className="flex w-6 items-center gap-[3px]">
              <Icon name="sigma" className="size-[14px]" />
              <Caret />
            </button>
            <button type="button" aria-label="Formula" className="flex w-[17px] justify-center">
              <Icon name="equals" className="size-3" />
            </button>
            <input
              aria-label="Input line"
              defaultValue="SYNTHÈSE ANALYTIQUE ET JOURNAUX DE SUIVI"
              className="h-[18px] min-w-0 flex-1 border border-[#d5d2cf] bg-white px-1 text-[9px] text-[#3d3d3d] outline-none"
            />
            <button type="button" aria-label="Expand formula bar" className="flex w-[15px] justify-center pr-1">
              <Caret className="h-[4px] w-[8px]" />
            </button>
          </div>

          <div className="flex min-h-0 flex-1">
            <Sheet />
            <div className="flex w-[9px] shrink-0 justify-center bg-[#cdcdcd] pt-[2px]">
              <div className="h-12 w-[5px] rounded-full bg-[#7d7d7d]" />
            </div>
          </div>
          <div className="flex h-[10px] shrink-0 items-center justify-between bg-[#cdcdcd] pl-[2px] pr-[11px]">
            <div className="h-[6px] w-[40%] rounded-full bg-[#7d7d7d]" />
            <div className="h-[7px] w-[2px] bg-[#555]" />
          </div>
          <TabBar />
        </div>

        <aside className="relative flex w-[39px] shrink-0 flex-col items-center border-l border-[#d0cdca] pt-[6px]">
          {['burger', 'props', 'styles', 'gallery', 'navigator'].map((n) => (
            <button key={n} type="button" aria-label={n} className="flex h-[29px] items-start justify-center pt-px">
              <Icon name={n} className="size-[15px]" />
            </button>
          ))}
          <button type="button" aria-label="Functions" className="flex">
            <Fx className="text-[18px] leading-[18px]" />
          </button>
          <button
            type="button"
            aria-label="Collapse sidebar"
            className="absolute left-0 top-[268px] flex h-[50px] w-1 items-center bg-[#8a8a8a]"
          >
            <svg viewBox="0 0 3 4" className="h-1 w-[3px]">
              <path d="M0 0l3 2-3 2z" fill="#fff" />
            </svg>
          </button>
        </aside>
      </div>

      <StatusBar />
    </div>
  );
}

export default App;
